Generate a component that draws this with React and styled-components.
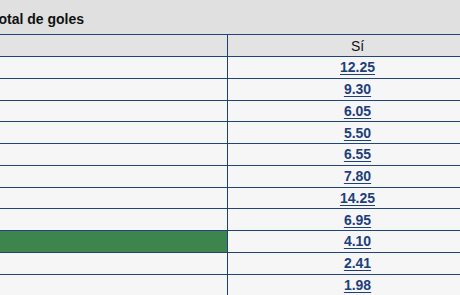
import React from "react";
import styled, { createGlobalStyle } from "styled-components";

const GlobalStyle = createGlobalStyle`
  html, body {
    margin: 0;
    padding: 0;
    background: #e0e0e0;
    overflow: hidden;
  }
  body {
    font-family: "Liberation Sans", Arial, sans-serif;
  }
`;

const Page = styled.div`
  width: 497px;
  margin-left: -10px;
  background: #e0e0e0;
`;

const Title = styled.h2`
  margin: 0;
  height: 34px;
  padding-left: 1px;
  box-sizing: border-box;
  display: flex;
  align-items: center;
  padding-top: 3px;
  font-size: 14px;
  font-weight: bold;
  color: #111;
`;

const Table = styled.div`
  display: grid;
  grid-template-columns: 238px 259px;
  border-top: 1px solid #22447e;
`;

const Cell = styled.div`
  box-sizing: border-box;
  height: ${(p) => (p.$head ? "22px" : "21.75px")};
  border-bottom: 1px solid #22447e;
  border-right: ${(p) => (p.$first ? "1px solid #1d3f7a" : "none")};
  background: ${(p) =>
    p.$win ? "#3d854d" : p.$head ? "#e3e3e3" : "#f6f6f6"};
  display: flex;
  align-items: center;
  justify-content: center;
  font-size: 14px;
  color: #111;
`;

const Odd = styled.a`
  color: #1f3f7b;
  font-weight: bold;
  text-decoration: underline;
  text-underline-offset: 2px;
  cursor: pointer;
`;

const odds = [
  { v: "12.25" },
  { v: "9.30" },
  { v: "6.05" },
  { v: "5.50" },
  { v: "6.55" },
  { v: "7.80" },
  { v: "14.25" },
  { v: "6.95" },
  { v: "4.10", win: true },
  { v: "2.41" },
  { v: "1.98" },
];

export default function App() {
  return (
    <>
      <GlobalStyle />
      <Page>
        <Title>Total de goles</Title>
        <Table>
          <Cell $head $first />
          <Cell $head>Sí</Cell>
          {odds.map((o, i) => (
            <React.Fragment key={i}>
              <Cell $first $win={o.win} />
              <Cell>
                <Odd>{o.v}</Odd>
              </Cell>
            </React.Fragment>
          ))}
        </Table>
      </Page>
    </>
  );
}
